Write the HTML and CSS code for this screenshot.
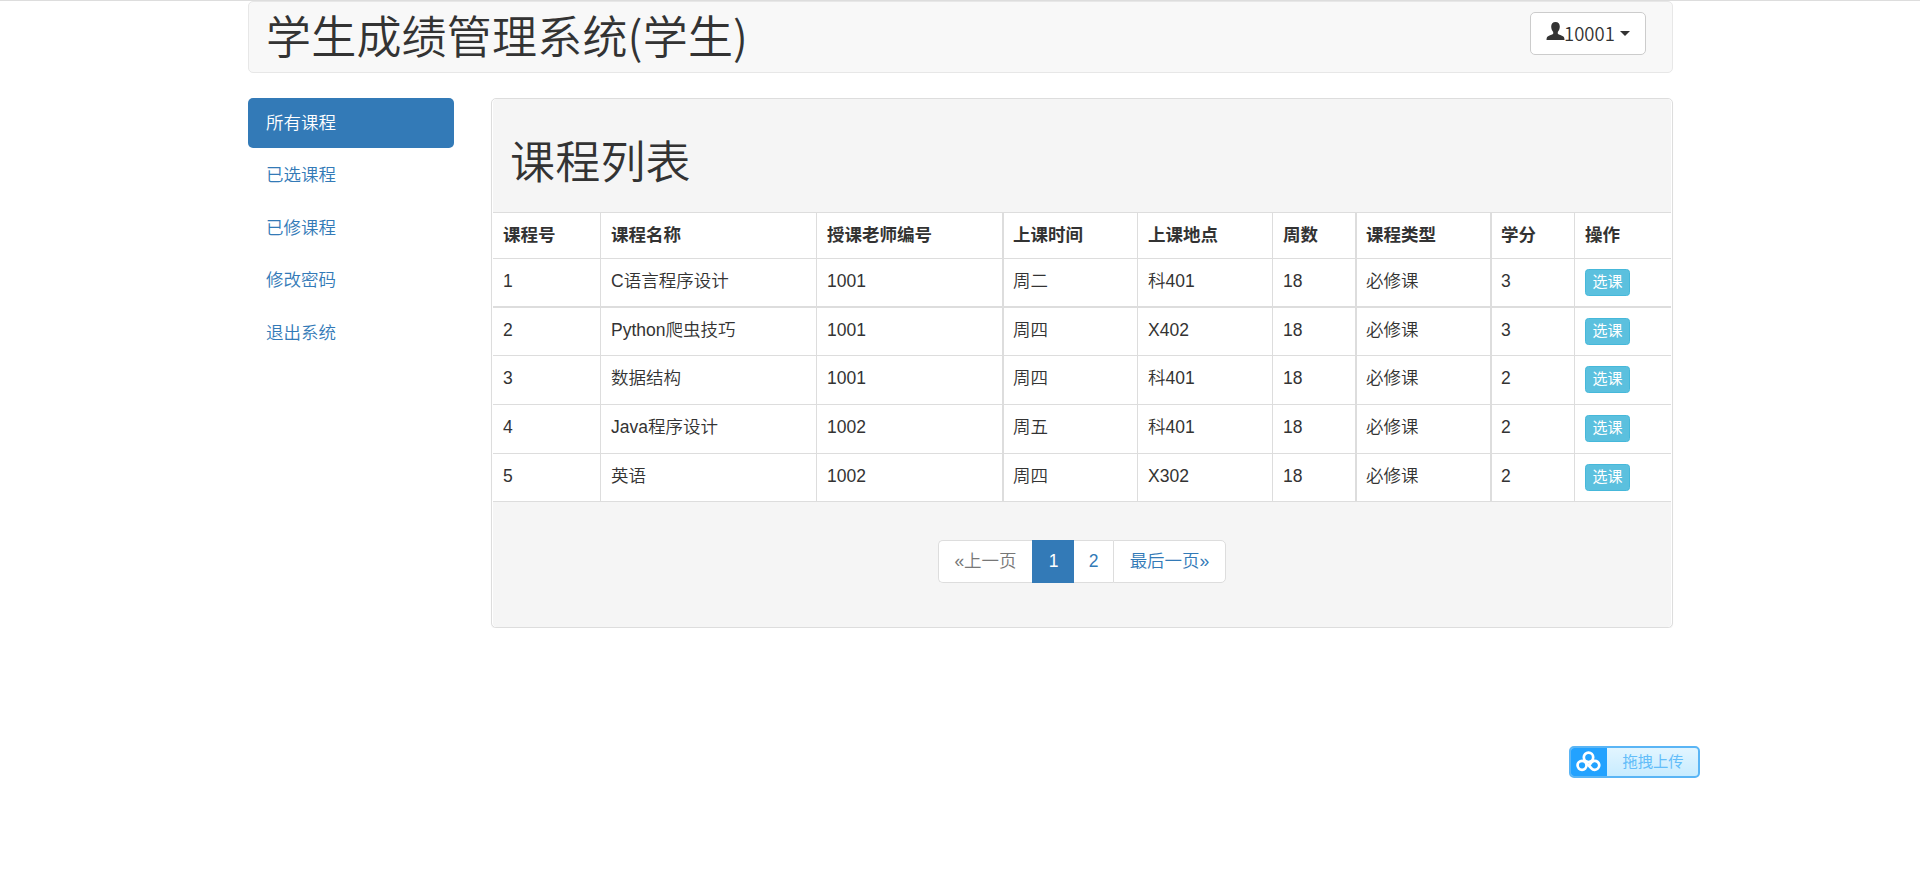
FILE: index.html
```html
<!DOCTYPE html>
<html lang="zh-CN">

<head>
  <meta charset="UTF-8">
  <meta name="viewport" content="width=device-width, initial-scale=1.0">
  <title>学生成绩管理系统</title>
  <link rel="stylesheet" href="styles.css">
</head>

<body>
  <div class="container">
    <!-- 顶栏 -->
    <header class="navbar">
      <h1>学生成绩管理系统(学生)</h1>
      <button class="btn-user" type="button">
        <svg class="icon-user" viewBox="0 0 18 18">
          <path d="M9 0C6.200 0 4.700 1.900 4.700 4.600C4.700 6.700 5.400 8.600 6.700 9.900V11.800C5.800 12.700 2.600 13.500 1.200 14.500C.3 15.200 0 16.400 0 18H18C18 16.400 17.700 15.200 16.800 14.500C15.400 13.500 12.200 12.700 11.300 11.800V9.900C12.600 8.600 13.300 6.700 13.300 4.600C13.300 1.900 11.800 0 9 0Z" />
        </svg>
        <span class="user-name">10001</span>
        <span class="caret"></span>
      </button>
    </header>

    <div class="row">
      <!-- 左侧菜单 -->
      <ul class="nav">
        <li><a class="active" href="#">所有课程</a></li>
        <li><a href="#">已选课程</a></li>
        <li><a href="#">已修课程</a></li>
        <li><a href="#">修改密码</a></li>
        <li><a href="#">退出系统</a></li>
      </ul>

      <!-- 课程列表 -->
      <div class="panel">
        <div class="panel-heading">
          <h1>课程列表</h1>
        </div>
        <table class="table">
          <colgroup>
            <col class="w-id">
            <col class="w-name">
            <col class="w-teacher">
            <col class="w-mid">
            <col class="w-mid">
            <col class="w-week">
            <col class="w-mid">
            <col class="w-score">
            <col>
          </colgroup>
          <thead>
            <tr>
              <th>课程号</th>
              <th>课程名称</th>
              <th>授课老师编号</th>
              <th class="thick">上课时间</th>
              <th>上课地点</th>
              <th>周数</th>
              <th class="thick">课程类型</th>
              <th class="thick">学分</th>
              <th>操作</th>
            </tr>
          </thead>
          <tbody>
            <tr class="short">
              <td>1</td>
              <td>C语言程序设计</td>
              <td>1001</td>
              <td class="thick">周二</td>
              <td>科401</td>
              <td>18</td>
              <td class="thick">必修课</td>
              <td class="thick">3</td>
              <td><button class="btn-info" type="button">选课</button></td>
            </tr>
            <tr class="thick-row">
              <td>2</td>
              <td>Python爬虫技巧</td>
              <td>1001</td>
              <td class="thick">周四</td>
              <td>X402</td>
              <td>18</td>
              <td class="thick">必修课</td>
              <td class="thick">3</td>
              <td><button class="btn-info" type="button">选课</button></td>
            </tr>
            <tr>
              <td>3</td>
              <td>数据结构</td>
              <td>1001</td>
              <td class="thick">周四</td>
              <td>科401</td>
              <td>18</td>
              <td class="thick">必修课</td>
              <td class="thick">2</td>
              <td><button class="btn-info" type="button">选课</button></td>
            </tr>
            <tr>
              <td>4</td>
              <td>Java程序设计</td>
              <td>1002</td>
              <td class="thick">周五</td>
              <td>科401</td>
              <td>18</td>
              <td class="thick">必修课</td>
              <td class="thick">2</td>
              <td><button class="btn-info" type="button">选课</button></td>
            </tr>
            <tr class="short">
              <td>5</td>
              <td>英语</td>
              <td>1002</td>
              <td class="thick">周四</td>
              <td>X302</td>
              <td>18</td>
              <td class="thick">必修课</td>
              <td class="thick">2</td>
              <td><button class="btn-info" type="button">选课</button></td>
            </tr>
          </tbody>
        </table>
        <!-- 分页 -->
        <div class="panel-footer">
          <ul class="pagination">
            <li class="prev disabled"><a href="#">«上一页</a></li>
            <li class="active"><a href="#">1</a></li>
            <li class="page"><a href="#">2</a></li>
            <li class="last"><a href="#">最后一页»</a></li>
          </ul>
        </div>
      </div>
    </div>
  </div>

  <!-- 悬浮上传按钮 -->
  <div class="upload">
    <div class="upload-icon">
      <svg viewBox="0 0 24 20">
        <circle cx="12" cy="6" r="4.500" />
        <circle cx="5.800" cy="13.700" r="4.300" />
        <path d="M9 10.500L14.800 16.500A4.300 4.300 0 1 0 14.500 11.200L12.500 14" />
      </svg>
    </div>
    <div class="upload-text">拖拽上传</div>
  </div>
</body>

</html>
```
FILE: styles.css
```css
* {
  box-sizing: border-box;
}

body {
  margin: 0;
  border-top: 1px solid #ddd;
  font-family: "Liberation Sans", "Noto Sans CJK SC", sans-serif;
  font-size: 17.5px;
  line-height: 25px;
  color: #333;
  background-color: #fff;
}

h1 {
  margin: 0;
  font-family: "Noto Sans CJK SC", sans-serif;
  font-size: 45px;
  font-weight: 350;
  line-height: 50px;
  letter-spacing: 0.2px;
}

a {
  color: #337ab7;
  text-decoration: none;
}

button {
  font-family: inherit;
  cursor: pointer;
}

ul {
  margin: 0;
  padding: 0;
  list-style: none;
}

.container {
  width: 1425px;
  margin-left: 248px;
}

/* 顶栏 */
.navbar {
  display: flex;
  justify-content: space-between;
  align-items: flex-start;
  height: 72px;
  margin-bottom: 25px;
  padding: 8px 26px 0 17px;
  border: 1px solid #e7e7e7;
  border-radius: 5px;
  background-color: #f8f8f8;
}

.btn-user {
  display: flex;
  align-items: center;
  width: 116px;
  height: 43px;
  margin-top: 2px;
  padding: 0 15px;
  border: 1px solid #ccc;
  border-radius: 5px;
  background-color: #fff;
  color: #333;
  font-family: "Noto Sans CJK SC", sans-serif;
  font-size: 18.5px;
  font-weight: 350;
}

.user-name {
  margin-top: -2px;
  margin-left: -1px;
}

.icon-user {
  flex: none;
  width: 19px;
  height: 18px;
  margin-top: -5px;
  fill: #333;
}

.caret {
  margin-left: 5px;
  border-top: 5px solid #333;
  border-left: 5px solid transparent;
  border-right: 5px solid transparent;
}

/* 左侧菜单 */
.row {
  display: flex;
  justify-content: space-between;
  align-items: flex-start;
}

.nav {
  display: flex;
  flex-direction: column;
  gap: 2.5px;
  width: 206px;
}

.nav a {
  display: block;
  height: 50px;
  padding: 12.5px 18px;
  border-radius: 5px;
  font-weight: 350;
}

.nav .active {
  background-color: #337ab7;
  color: #fff;
}

/* 课程面板 */
.panel {
  width: 1182px;
  height: 530px;
  padding: 0 1px;
  border: 1px solid #ddd;
  border-radius: 5px;
  background-color: #fff;
  box-shadow: 0 1px 1px rgba(0, 0, 0, 0.05);
}

.panel-heading {
  height: 113px;
  padding: 36px 17px 0;
  border-radius: 4px 4px 0 0;
  background-color: #f5f5f5;
}

.table {
  width: 100%;
  table-layout: fixed;
  border-collapse: separate;
  border-spacing: 0;
  border-bottom: 1px solid #ddd;
}

.table th,
.table td {
  padding: 10px 0 0 10px;
  border-top: 1px solid #ddd;
  border-left: 1px solid #ddd;
  text-align: left;
  vertical-align: top;
}

.table td {
  font-weight: 350;
}

.table th:first-child,
.table td:first-child {
  border-left: 0;
}

.table .thick {
  padding-left: 9px;
  border-left-width: 2px;
}

.table .thick-row td {
  border-top-width: 2px;
}

.table tr {
  height: 49px;
}

.table thead tr {
  height: 46px;
}

.table .short {
  height: 48px;
}

.w-id {
  width: 107px;
}

.w-name {
  width: 216px;
}

.w-teacher {
  width: 186px;
}

.w-mid {
  width: 135px;
}

.w-week {
  width: 83px;
}

.w-score {
  width: 84px;
}

.btn-info {
  display: block;
  width: 45px;
  height: 27px;
  padding: 0 0 2px;
  border: 1px solid #46b8da;
  border-radius: 3.5px;
  background-color: #5bc0de;
  color: #fff;
  font-size: 15px;
  line-height: 22px;
}

/* 分页 */
.panel-footer {
  display: flex;
  justify-content: center;
  height: 125px;
  padding-top: 38px;
  border-radius: 0 0 4px 4px;
  background-color: #f5f5f5;
}

.pagination {
  display: flex;
  height: 43px;
  font-weight: 350;
}

.pagination a {
  display: block;
  height: 43px;
  padding-top: 8px;
  border: 1px solid #ddd;
  border-right: 0;
  background-color: #fff;
  text-align: center;
}

.pagination .prev a {
  width: 94px;
  border-radius: 5px 0 0 5px;
}

.pagination .disabled a {
  color: #777;
}

.pagination .active a {
  width: 42px;
  border-color: #337ab7;
  background-color: #337ab7;
  color: #fff;
}

.pagination .page a {
  width: 39px;
  border-left: 0;
}

.pagination .last a {
  width: 113px;
  border-right: 1px solid #ddd;
  border-radius: 0 5px 5px 0;
}

/* 悬浮上传按钮 */
.upload {
  position: absolute;
  top: 746px;
  left: 1569px;
  display: flex;
  width: 131px;
  height: 32px;
  border: 2px solid #5ab5f5;
  border-radius: 5px;
  background: linear-gradient(#e2f5ff, #c8ecff);
  overflow: hidden;
}

.upload-icon {
  display: flex;
  align-items: center;
  justify-content: center;
  width: 38px;
  margin: -2px 0 -2px -2px;
  background-color: #22a2ff;
}

.upload-icon svg {
  width: 25px;
  height: 21px;
  margin-left: 1px;
  margin-top: -2px;
  fill: none;
  stroke: #fff;
  stroke-width: 2.6;
  stroke-linecap: round;
}

.upload-text {
  flex: 1;
  padding-left: 1px;
  color: #63bdf9;
  font-size: 15.3px;
  line-height: 28px;
  text-align: center;
}
```
